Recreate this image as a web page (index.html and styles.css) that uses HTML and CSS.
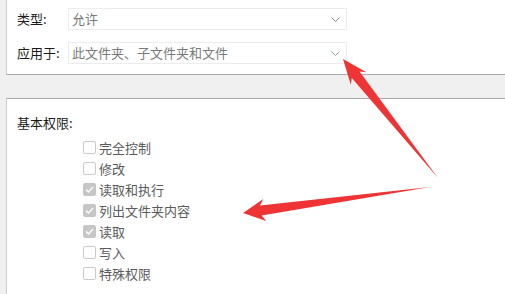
FILE: index.html
```html
<!DOCTYPE html>
<html lang="zh">
<head>
<meta charset="utf-8">
<link rel="stylesheet" href="styles.css">
</head>
<body>
<div class="page">
  <section class="panel panel-top">
    <div class="field">
      <span class="label">类型:</span>
      <div class="select"><span class="value">允许</span><svg class="chev" width="9" height="5" viewBox="0 0 9 5"><path d="M0.5 0.5 L4.5 4.5 L8.5 0.5" fill="none" stroke="#8a8a8a" stroke-width="1"/></svg></div>
    </div>
    <div class="field">
      <span class="label">应用于:</span>
      <div class="select"><span class="value">此文件夹、子文件夹和文件</span><svg class="chev" width="9" height="5" viewBox="0 0 9 5"><path d="M0.5 0.5 L4.5 4.5 L8.5 0.5" fill="none" stroke="#7fa98a" stroke-width="1"/></svg></div>
    </div>
  </section>
  <section class="panel panel-perm">
    <div class="title">基本权限:</div>
    <ul class="perms">
      <li><span class="box"></span>完全控制</li>
      <li><span class="box"></span>修改</li>
      <li><span class="box checked"><svg width="9" height="7" viewBox="0 0 9 7"><path d="M1 3.5 L3.5 6 L8 1" fill="none" stroke="#fff" stroke-width="1.3"/></svg></span>读取和执行</li>
      <li><span class="box checked"><svg width="9" height="7" viewBox="0 0 9 7"><path d="M1 3.5 L3.5 6 L8 1" fill="none" stroke="#fff" stroke-width="1.3"/></svg></span>列出文件夹内容</li>
      <li><span class="box checked"><svg width="9" height="7" viewBox="0 0 9 7"><path d="M1 3.5 L3.5 6 L8 1" fill="none" stroke="#fff" stroke-width="1.3"/></svg></span>读取</li>
      <li><span class="box"></span>写入</li>
      <li><span class="box"></span>特殊权限</li>
    </ul>
  </section>
  <svg class="arrows" width="505" height="294" viewBox="0 0 505 294">
    <polygon fill="#ee3434" points="343,59 366.4,72.2 359.5,71.5 438,178 351.8,78 350.8,84.8"/>
    <polygon fill="#ee3434" points="243,213 263.3,199.1 260,205.5 430,187 261.6,215.5 266.3,220.9"/>
  </svg>
</div>
</body>
</html>
```
FILE: styles.css
```css
html, body {
  margin: 0;
  padding: 0;
}
body {
  background: #f0f0f0;
  font-family: "Noto Sans CJK SC", "Noto Sans", sans-serif;
  font-size: 13px;
  color: #1a1a1a;
}
.page {
  position: relative;
  width: 505px;
  height: 294px;
  overflow: hidden;
  display: flex;
  flex-direction: column;
}
.panel {
  background: #fff;
  margin-left: 6px;
  border-left: 1px solid #cfcfcf;
}
.panel-top {
  height: 75px;
  box-sizing: border-box;
  padding: 8px 0 0 10px;
  border-bottom: 1px solid #a9a9a9;
  display: flex;
  flex-direction: column;
  gap: 12px;
}
.field {
  display: flex;
  align-items: center;
  height: 22px;
}
.label {
  width: 51px;
  line-height: 18px;
}
.select {
  width: 279px;
  height: 22px;
  box-sizing: border-box;
  border: 1px solid #ececec;
  display: flex;
  align-items: center;
  justify-content: space-between;
  padding: 0 6px 0 3px;
}
.value {
  color: #7a7a7a;
  line-height: 18px;
}
.chev {
  display: block;
}
.panel-perm {
  margin-top: 23px;
  flex: 1;
  border-top: 1px solid #a9a9a9;
  padding: 15px 0 0 10px;
}
.title {
  line-height: 18px;
}
.perms {
  list-style: none;
  margin: 5px 0 0 66px;
  padding: 0;
}
.perms li {
  height: 21px;
  display: flex;
  align-items: center;
  gap: 3px;
  color: #5a5a5a;
}
.box {
  width: 13px;
  height: 13px;
  box-sizing: border-box;
  border: 1px solid #cacaca;
  border-radius: 2px;
  background: #fff;
  display: flex;
  align-items: center;
  justify-content: center;
}
.box.checked {
  background: #c6c6c6;
  border-color: #c6c6c6;
}
.arrows {
  position: absolute;
  left: 0;
  top: 0;
  pointer-events: none;
}
```
